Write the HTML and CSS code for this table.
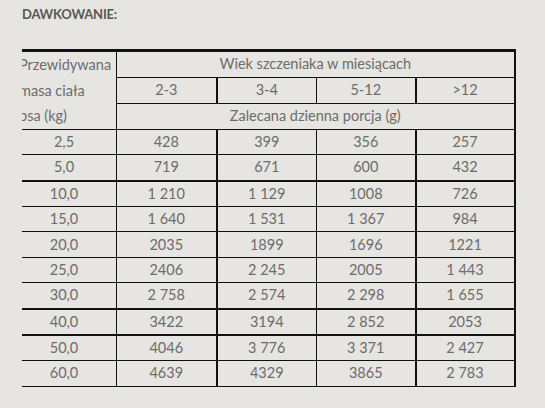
FILE: index.html
```html
<!DOCTYPE html>
<html lang="pl">
<head>
<meta charset="utf-8">
<title>Dawkowanie</title>
<link rel="stylesheet" href="styles.css">
</head>
<body>
<h1 class="title">DAWKOWANIE:</h1>
<div class="clip">
<table class="dose">
<colgroup>
<col class="c-mass"><col class="c-age"><col class="c-age"><col class="c-age2"><col class="c-age2">
</colgroup>
<thead>
<tr class="top">
<th class="mass" rowspan="3"><span>Przewidywana</span><span>masa ciała</span><span>psa (kg)</span></th>
<th colspan="4" class="last">Wiek szczeniaka w miesiącach</th>
</tr>
<tr>
<th>2-3</th><th class="tk">3-4</th><th>5-12</th><th class="tk last">&gt;12</th>
</tr>
<tr>
<th colspan="4" class="last">Zalecana dzienna porcja (g)</th>
</tr>
</thead>
<tbody>
<tr><td>2,5</td><td>428</td><td class="tk">399</td><td>356</td><td class="tk last">257</td></tr>
<tr class="thick"><td>5,0</td><td>719</td><td class="tk">671</td><td>600</td><td class="tk last">432</td></tr>
<tr><td>10,0</td><td>1 210</td><td class="tk">1 129</td><td>1008</td><td class="tk last">726</td></tr>
<tr><td>15,0</td><td>1 640</td><td class="tk">1 531</td><td>1 367</td><td class="tk last">984</td></tr>
<tr><td>20,0</td><td>2035</td><td class="tk">1899</td><td>1696</td><td class="tk last">1221</td></tr>
<tr><td>25,0</td><td>2406</td><td class="tk">2 245</td><td>2005</td><td class="tk last">1 443</td></tr>
<tr class="thick"><td>30,0</td><td>2 758</td><td class="tk">2 574</td><td>2 298</td><td class="tk last">1 655</td></tr>
<tr class="thick"><td>40,0</td><td>3422</td><td class="tk">3194</td><td>2 852</td><td class="tk last">2053</td></tr>
<tr><td>50,0</td><td>4046</td><td class="tk">3 776</td><td>3 371</td><td class="tk last">2 427</td></tr>
<tr><td>60,0</td><td>4639</td><td class="tk">4329</td><td>3865</td><td class="tk last">2 783</td></tr>
</tbody>
</table>
</div>
</body>
</html>
```
FILE: styles.css
```css
html, body {
  margin: 0;
  padding: 0;
  background: #e6e5e1;
}
body {
  font-family: Lato, "Open Sans", sans-serif;
  color: #6c6c6c;
  height: 408px;
  overflow: hidden;
}
.title {
  margin: 0;
  padding: 6px 0 0 22px;
  font-size: 13px;
  letter-spacing: -0.2px;
  font-weight: 700;
  color: #585858;
  line-height: 16px;
  height: 43px;
}
.clip {
  margin-left: 22px;
  width: 496px;
  overflow: hidden;
}
.dose {
  margin-left: -11px;
  border-collapse: collapse;
  table-layout: fixed;
  width: 503px;
  font-size: 14.5px;
  border-top: 3px solid #111;
}
.c-mass { width: 105px; }
.c-age { width: 100px; }
.c-age2 { width: 99px; }
.dose th, .dose td {
  font-weight: 400;
  text-align: center;
  padding: 0;
  height: 24.4px;
  border: 1px solid #111;
  line-height: 16px;
  white-space: nowrap;
}
.dose th.mass {
  text-align: left;
  padding-left: 7px;
  vertical-align: top;
}
.dose th.mass span {
  display: block;
  height: 25.6px;
  line-height: 25.6px;
}
.dose .tk { border-left: 2px solid #111; }
.dose .last { border-right: 2px solid #111; }
.dose tr.thick td { border-bottom: 2px solid #111; }
```
